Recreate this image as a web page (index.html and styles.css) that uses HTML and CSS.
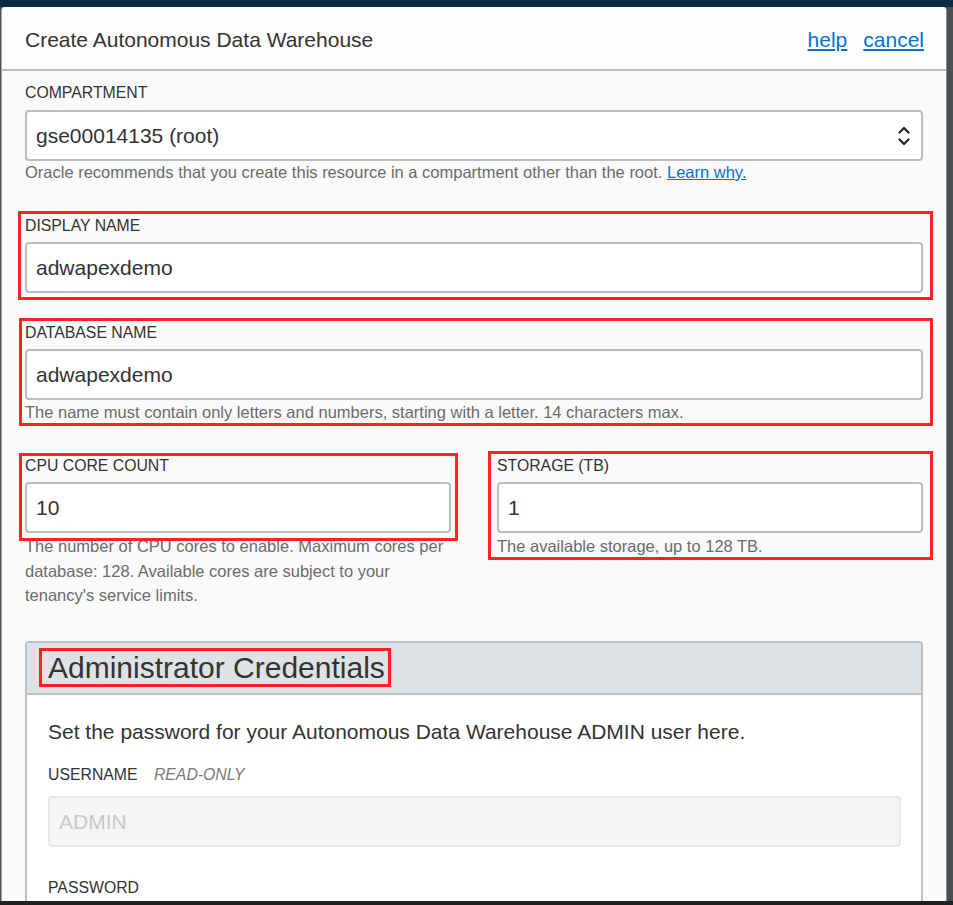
FILE: index.html
```html
<!DOCTYPE html>
<html lang="en">
<head>
<meta charset="utf-8">
<title>Create Autonomous Data Warehouse</title>
<link rel="stylesheet" href="styles.css">
</head>
<body>
<div class="screen">
  <div class="topbar"></div>
  <div class="dialog">
    <div class="dlg-header">
      <h1 class="dlg-title">Create Autonomous Data Warehouse</h1>
      <div class="dlg-links">
        <a class="link" href="#">help</a>
        <a class="link" href="#">cancel</a>
      </div>
    </div>
    <div class="dlg-body">
      <div class="field field-compartment">
        <div class="label">COMPARTMENT</div>
        <div class="input select">
          <span>gse00014135 (root)</span>
          <svg class="chev" width="14" height="22" viewBox="0 0 14 22" aria-hidden="true">
            <path d="M2.5 7.5 L7 3 L11.5 7.5" fill="none" stroke="#222" stroke-width="2.2" stroke-linecap="round" stroke-linejoin="round"/>
            <path d="M2.5 14.5 L7 19 L11.5 14.5" fill="none" stroke="#222" stroke-width="2.2" stroke-linecap="round" stroke-linejoin="round"/>
          </svg>
        </div>
        <div class="help">Oracle recommends that you create this resource in a compartment other than the root. <a class="link" href="#">Learn why.</a></div>
      </div>

      <div class="field field-display">
        <span class="mark mark-display"></span>
        <div class="label">DISPLAY NAME</div>
        <div class="input">adwapexdemo</div>
      </div>

      <div class="field field-db">
        <span class="mark mark-db"></span>
        <div class="label">DATABASE NAME</div>
        <div class="input">adwapexdemo</div>
        <div class="help help-tight">The name must contain only letters and numbers, starting with a letter. 14 characters max.</div>
      </div>

      <div class="row">
        <div class="field">
          <div class="marked">
            <span class="mark mark-cpu"></span>
            <div class="label">CPU CORE COUNT</div>
            <div class="input">10</div>
          </div>
          <div class="help help-multi">The number of CPU cores to enable. Maximum cores per database: 128. Available cores are subject to your tenancy's service limits.</div>
        </div>
        <div class="field">
          <span class="mark mark-storage"></span>
          <div class="label">STORAGE (TB)</div>
          <div class="input">1</div>
          <div class="help help-multi">The available storage, up to 128 TB.</div>
        </div>
      </div>

      <div class="panel">
        <div class="panel-head">
          <h2 class="panel-title"><span class="boxed">Administrator Credentials</span></h2>
        </div>
        <div class="panel-body">
          <p class="lead">Set the password for your Autonomous Data Warehouse ADMIN user here.</p>
          <div class="label label-user">USERNAME <span class="ro">READ-ONLY</span></div>
          <div class="input input-disabled">ADMIN</div>
          <div class="label label-pass">PASSWORD</div>
        </div>
      </div>
    </div>
  </div>
  <div class="bottombar"></div>
</div>
</body>
</html>
```

FILE: styles.css
```css
* { box-sizing: border-box; }

html, body {
  margin: 0;
  padding: 0;
}

body {
  background: #4b4f54;
  font-family: "Liberation Sans", Arial, sans-serif;
  color: #333;
}

.screen {
  width: 953px;
  height: 905px;
  overflow: hidden;
  display: flex;
  flex-direction: column;
  background: #4b4f54;
}

.topbar {
  height: 7px;
  flex: none;
  background: #0d2a45;
}

.bottombar {
  height: 4px;
  flex: none;
  background: #1f2021;
}

.dialog {
  flex: none;
  height: 894px;
  width: 946px;
  margin-left: 1px;
  border-left: 1px solid #a4a8ae;
  border-right: 1px solid #8a8e94;
  border-radius: 4px 4px 0 0;
  background: #fafafa;
  overflow: hidden;
}

.dlg-header {
  height: 64px;
  padding: 4px 22px 0 23px;
  display: flex;
  align-items: center;
  justify-content: space-between;
  background: #fdfdfd;
  border-bottom: 2px solid #b9bdc3;
}

.dlg-title {
  margin: 0;
  font-size: 21px;
  font-weight: normal;
  line-height: 24px;
  color: #333;
}

.dlg-links {
  display: flex;
  gap: 16px;
  font-size: 21px;
  line-height: 24px;
}

.link {
  color: #0572ce;
  text-decoration: underline;
}

.dlg-body {
  padding: 13px 23px 0 23px;
}

.field {
  position: relative;
}

.marked {
  position: relative;
}

.label {
  font-size: 15.8px;
  line-height: 18px;
  color: #333;
  margin-bottom: 7px;
}

.field-compartment .label {
  margin-bottom: 8px;
}

.input {
  height: 51px;
  border: 2px solid #b9bdc4;
  border-radius: 4px;
  background: #fff;
  padding: 0 9px;
  font-size: 21px;
  line-height: 47px;
  color: #333;
  white-space: nowrap;
}

.select {
  display: flex;
  align-items: center;
  justify-content: space-between;
  padding-right: 10px;
}

.chev {
  display: block;
}

.help {
  margin-top: 1px;
  font-size: 16.5px;
  line-height: 20px;
  color: #6b6b6b;
}

.help-tight {
  margin-top: 2px;
}

.help-multi {
  line-height: 24.5px;
  margin-top: 1px;
}

.field-display {
  margin-top: 35px;
}

.field-db {
  margin-top: 31px;
}

.row {
  margin-top: 35px;
  display: grid;
  grid-template-columns: 426px 426px;
  column-gap: 46px;
  align-items: start;
}

.mark {
  position: absolute;
  border: 3px solid #ff2121;
  pointer-events: none;
}

.mark-display { top: -6px; left: -7px; right: -10px; bottom: -7px; }
.mark-db { top: -6px; left: -6px; right: -10px; bottom: -4px; }
.mark-cpu { top: -4px; left: -6px; right: -7px; bottom: -8px; }
.mark-storage { top: -6px; left: -9px; right: -10px; bottom: -1px; }

.panel {
  margin-top: 33px;
  border: 2px solid #bcc0c6;
  border-bottom: none;
  border-radius: 4px 4px 0 0;
  background: #fff;
}

.panel-head {
  background: #dfe2e5;
  border-bottom: 2px solid #bcc0c6;
  padding: 5px 12px 6px 12px;
}

.panel-title {
  margin: 0;
  font-weight: normal;
  font-size: 30px;
  line-height: 33px;
  color: #333;
}

.boxed {
  display: inline-block;
  border: 3px solid #ff2121;
  padding: 0 3px 0 6px;
}

.panel-body {
  padding: 25px 20px 0 21px;
  height: 220px;
}

.lead {
  margin: 0;
  font-size: 21px;
  line-height: 24px;
  color: #333;
}

.label-user {
  margin-top: 22px;
  margin-bottom: 12px;
}

.ro {
  font-style: italic;
  color: #7a7a7a;
  margin-left: 12px;
}

.input-disabled {
  background: #f5f5f5;
  border-color: #e6e8ea;
  color: #c9c9c9;
}

.label-pass {
  margin-top: 32px;
}
```
